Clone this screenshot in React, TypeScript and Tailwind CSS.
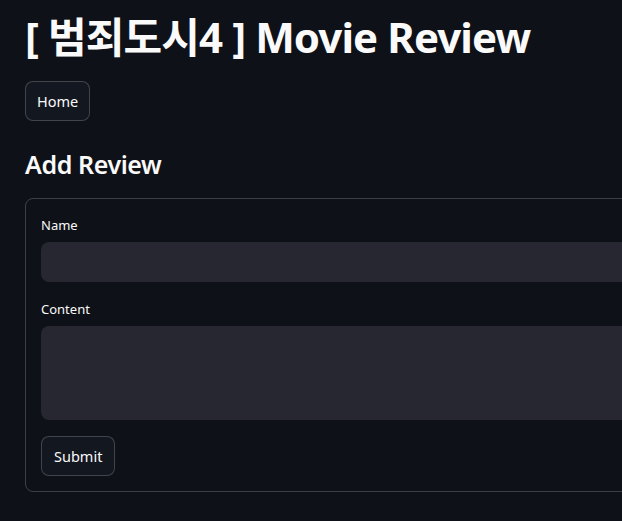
const font = {
  fontFamily: '"Noto Sans", "Noto Sans CJK KR", sans-serif',
};

export default function App() {
  return (
    <div className="min-h-[521px] w-full overflow-hidden bg-[#0e1117] text-[#fafafa]" style={font}>
      <div className="w-[740px] px-[25px] pt-[12px] pb-[30px]">
        <h1 className="text-[42px] font-bold leading-[1.2] tracking-[-0.9px]">[ 범죄도시4 ] Movie Review</h1>

        <button className="mt-[19px] h-[40px] rounded-lg border border-[#fafafa]/20 bg-[#131720] px-[11px] text-[14.5px]">
          Home
        </button>

        <h2 className="mt-[28px] text-[25px] font-semibold leading-[1.2] tracking-[-0.4px]">Add Review</h2>

        <form className="mt-[19px] rounded-lg border border-[#fafafa]/20 p-[15px]">
          <div className="flex flex-col">
            <label className="mt-[1px] text-[13px] leading-[20px]">Name</label>
            <div className="mt-[7px] h-[40px] rounded-lg bg-[#262730]" />

            <label className="mt-[17px] text-[13px] leading-[20px]">Content</label>
            <div className="mt-[7px] h-[94px] rounded-lg bg-[#262730]" />

            <div className="mt-[16px]">
              <button type="button" className="h-[40px] rounded-lg border border-[#fafafa]/20 bg-[#131720] px-[12px] text-[14.5px]">
                Submit
              </button>
            </div>
          </div>
        </form>
      </div>
    </div>
  );
}
